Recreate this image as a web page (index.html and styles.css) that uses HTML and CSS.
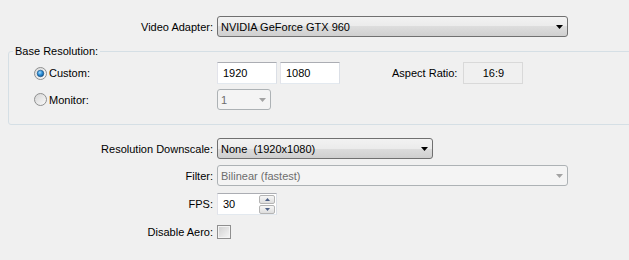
FILE: index.html
```html
<!DOCTYPE html>
<html>
<head>
  <meta charset="UTF-8">
  <title>Video Settings</title>
  <link rel="stylesheet" href="styles.css">
</head>
<body>
  <div class="dialog">
    <div class="row row-adapter">
      <span class="label">Video Adapter:</span>
      <div class="combo combo-wide">
        <span class="combo-text">NVIDIA GeForce GTX 960</span>
        <svg class="arrow" width="7" height="4" viewBox="0 0 7 4"><polygon points="0,0 7,0 3.5,4" fill="#000"/></svg>
      </div>
    </div>

    <fieldset class="group">
      <legend>Base Resolution:</legend>
      <div class="group-body">
        <div class="group-row">
          <label class="radio-label">
            <svg class="radio" width="13" height="13" viewBox="0 0 13 13">
              <defs>
                <linearGradient id="rb1" x1="0" y1="0" x2="1" y2="1">
                  <stop offset="0" stop-color="#d8d8d8"/>
                  <stop offset="1" stop-color="#fbfbfb"/>
                </linearGradient>
                <radialGradient id="dot" cx="0.4" cy="0.35" r="0.7">
                  <stop offset="0" stop-color="#a6dcff"/>
                  <stop offset="0.5" stop-color="#2c8fd8"/>
                  <stop offset="1" stop-color="#0e4f8c"/>
                </radialGradient>
              </defs>
              <circle cx="6.5" cy="6.5" r="6" fill="url(#rb1)" stroke="#8e8f8f"/>
              <circle cx="6.5" cy="6.5" r="3.3" fill="url(#dot)" stroke="#1a4f7e" stroke-width="0.6"/>
            </svg>
            <span>Custom:</span>
          </label>
          <div class="controls">
            <div class="field">1920</div>
            <div class="field">1080</div>
            <span class="aspect-label">Aspect Ratio:</span>
            <div class="field field-readonly">16:9</div>
          </div>
        </div>
        <div class="group-row">
          <label class="radio-label">
            <svg class="radio" width="13" height="13" viewBox="0 0 13 13">
              <defs>
                <linearGradient id="rb2" x1="0" y1="0" x2="1" y2="1">
                  <stop offset="0" stop-color="#d4d4d4"/>
                  <stop offset="1" stop-color="#fbfbfb"/>
                </linearGradient>
              </defs>
              <circle cx="6.5" cy="6.5" r="6" fill="url(#rb2)" stroke="#8e8f8f"/>
            </svg>
            <span>Monitor:</span>
          </label>
          <div class="controls">
            <div class="combo combo-disabled combo-small">
              <span class="combo-text">1</span>
              <svg class="arrow" width="7" height="4" viewBox="0 0 7 4"><polygon points="0,0 7,0 3.5,4" fill="#a3a3a3"/></svg>
            </div>
          </div>
        </div>
      </div>
    </fieldset>

    <div class="row row-downscale">
      <span class="label">Resolution Downscale:</span>
      <div class="combo combo-mid">
        <span class="combo-text">None&nbsp; (1920x1080)</span>
        <svg class="arrow" width="7" height="4" viewBox="0 0 7 4"><polygon points="0,0 7,0 3.5,4" fill="#000"/></svg>
      </div>
    </div>

    <div class="row row-filter">
      <span class="label">Filter:</span>
      <div class="combo combo-wide combo-disabled">
        <span class="combo-text">Bilinear (fastest)</span>
        <svg class="arrow" width="7" height="4" viewBox="0 0 7 4"><polygon points="0,0 7,0 3.5,4" fill="#a3a3a3"/></svg>
      </div>
    </div>

    <div class="row row-fps">
      <span class="label">FPS:</span>
      <div class="field field-spin">
        <span class="spin-text">30</span>
        <div class="spin">
          <div class="spin-btn"><svg width="5" height="3" viewBox="0 0 5 3"><polygon points="2.5,0 5,3 0,3" fill="#4c5f85"/></svg></div>
          <div class="spin-btn"><svg width="5" height="3" viewBox="0 0 5 3"><polygon points="0,0 5,0 2.5,3" fill="#4c5f85"/></svg></div>
        </div>
      </div>
    </div>

    <div class="row row-aero">
      <span class="label">Disable Aero:</span>
      <div class="checkbox"></div>
    </div>
  </div>
</body>
</html>
```

FILE: styles.css
```css
* {
  box-sizing: border-box;
}

html,
body {
  margin: 0;
  padding: 0;
}

body {
  width: 629px;
  height: 260px;
  overflow: hidden;
  background-color: #f0f0f0;
  font-family: "Liberation Sans", Arial, sans-serif;
  font-size: 11px;
  color: #000;
}

.dialog {
  padding-top: 16px;
}

.row {
  display: grid;
  grid-template-columns: 213px auto;
  column-gap: 4px;
  align-items: center;
  justify-content: start;
}

.row .label {
  text-align: right;
  white-space: nowrap;
}

/* combo boxes */
.combo {
  height: 21px;
  display: flex;
  align-items: center;
  padding: 0 4px 0 3px;
  border: 1px solid #707070;
  border-radius: 3px;
  background: linear-gradient(#f2f2f2 0%, #ebebeb 50%, #dddddd 50%, #cfcfcf 100%);
  white-space: nowrap;
}

.combo .arrow {
  margin-left: auto;
  flex: none;
}

.combo-wide {
  width: 351px;
}

.combo-mid {
  width: 216px;
}

.combo-small {
  width: 54px;
}

.combo-disabled {
  border-color: #adb2b5;
  background: #f4f4f4;
  color: #6d6d6d;
}

/* group box */
.group {
  margin: 8px -30px 0 8px;
  padding: 0;
  border: 1px solid #d5dfe5;
  border-radius: 3px;
}

.group legend {
  margin-left: 4px;
  padding: 0 2px;
  line-height: 13px;
}

.group-body {
  padding: 4px 0 14px 25px;
  display: flex;
  flex-direction: column;
  gap: 5px;
}

.group-row {
  display: grid;
  grid-template-columns: 183px auto;
  align-items: center;
  justify-content: start;
}

.group-row:first-child {
  height: 22px;
}

.radio-label {
  display: flex;
  align-items: center;
  gap: 2px;
}

.radio {
  display: block;
}

.controls {
  display: flex;
  align-items: center;
  gap: 3px;
}

/* text fields */
.field {
  width: 60px;
  height: 22px;
  display: flex;
  align-items: center;
  padding: 0 5px;
  background-color: #fff;
  border: 1px solid;
  border-color: #abadb3 #dbdfe6 #e3e9ef #e2e3ea;
}

.aspect-label {
  margin-left: 49px;
  margin-right: 3px;
}

.field-readonly {
  justify-content: center;
  background-color: #f0f0f0;
  border-color: #d9d9d9;
}

.field-spin {
  padding: 0 1px 0 5px;
}

.spin-text {
  flex: 1;
}

.spin {
  display: flex;
  flex-direction: column;
  gap: 1px;
  margin-top: 1px;
}

.spin-btn {
  width: 16px;
  height: 9px;
  display: flex;
  align-items: center;
  justify-content: center;
  border: 1px solid #b4b4b4;
  border-radius: 2px;
  background: linear-gradient(#f6f6f6, #dedede);
}

.spin-btn svg {
  display: block;
}

.row-downscale {
  margin-top: 13px;
}

.row-filter {
  margin-top: 6px;
}

.row-fps {
  margin-top: 7px;
}

.row-aero {
  margin-top: 10px;
}

.checkbox {
  width: 14px;
  height: 14px;
  border: 1px solid #8f8f8f;
  background: linear-gradient(135deg, #cfcfcf, #f7f7f7);
  box-shadow: inset 0 0 0 1px #f4f4f4;
}
```
